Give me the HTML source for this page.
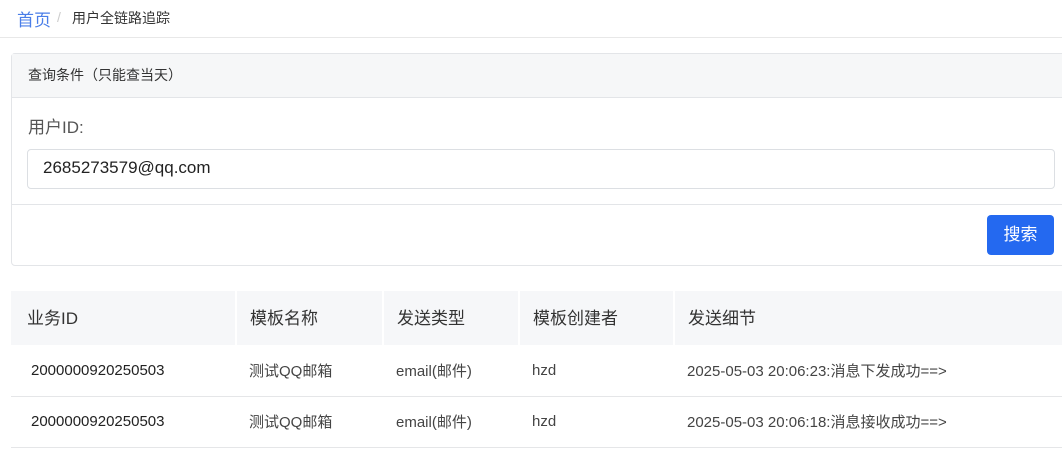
<!DOCTYPE html>
<html><head><meta charset="utf-8"><style>
*{box-sizing:border-box;margin:0;padding:0}
body{width:1062px;height:456px;overflow:hidden;background:#fff;font-family:"Liberation Sans","Noto Sans CJK SC",sans-serif;color:#333;position:relative}
.bc{position:absolute;left:0;top:0;width:1062px;height:38px;border-bottom:1px solid #e8e8e8}
.bc .h{position:absolute;left:17px;top:6px;font-size:17px;color:#4a7ee8}
.bc .s{position:absolute;left:57px;top:9px;font-size:14px;color:#ccc}
.bc .c{position:absolute;left:72px;top:8px;font-size:14px;color:#333}
.card{position:absolute;left:11px;top:53px;width:1060px;height:213px;border:1px solid #e3e5e8;border-radius:4px}
.ch{height:44px;background:#f6f7f8;border-bottom:1px solid #e3e5e8;font-size:14px;padding:11px 0 0 16px;color:#333}
.lbl{position:absolute;left:16px;top:59px;font-size:17px;color:#555}
.inp{position:absolute;left:15px;top:95px;width:1028px;height:40px;border:1px solid #dcdfe3;border-radius:4px;font-size:17px;padding:8px 0 0 15px;color:#222}
.ft{position:absolute;left:0;top:150px;width:100%;border-top:1px solid #e3e5e8}
.btn{position:absolute;left:975px;top:161px;width:67px;height:40px;background:#2469f0;border-radius:4px;color:#fff;font-size:17px;text-align:center;line-height:40px}
table{position:absolute;left:11px;top:291px;border-collapse:collapse;width:1060px}
th{background:#f6f7f9;height:54px;font-weight:normal;font-size:17px;text-align:left;padding-left:13px;padding-bottom:3px;border-left:2px solid #fff;color:#333}
th:first-child{border-left:none;padding-left:16px}
td{height:51px;font-size:15px;padding-left:20px;border-bottom:1px solid #e5e6e8;color:#222}
td.g{padding-left:13px;color:#444}
</style></head><body>
<div class="bc"><span class="h">首页</span><span class="s">/</span><span class="c">用户全链路追踪</span></div>
<div class="card"><div class="ch">查询条件（只能查当天）</div>
<div class="lbl">用户ID:</div><div class="inp">2685273579@qq.com</div>
<div class="ft"></div><div class="btn">搜索</div></div>
<table>
<tr><th style="width:225px">业务ID</th><th style="width:147px">模板名称</th><th style="width:136px">发送类型</th><th style="width:155px">模板创建者</th><th>发送细节</th></tr>
<tr><td>2000000920250503</td><td class="g">测试QQ邮箱</td><td class="g">email(邮件)</td><td class="g">hzd</td><td class="g">2025-05-03 20:06:23:消息下发成功==&gt;</td></tr>
<tr><td>2000000920250503</td><td class="g">测试QQ邮箱</td><td class="g">email(邮件)</td><td class="g">hzd</td><td class="g">2025-05-03 20:06:18:消息接收成功==&gt;</td></tr>
</table>
</body></html>
